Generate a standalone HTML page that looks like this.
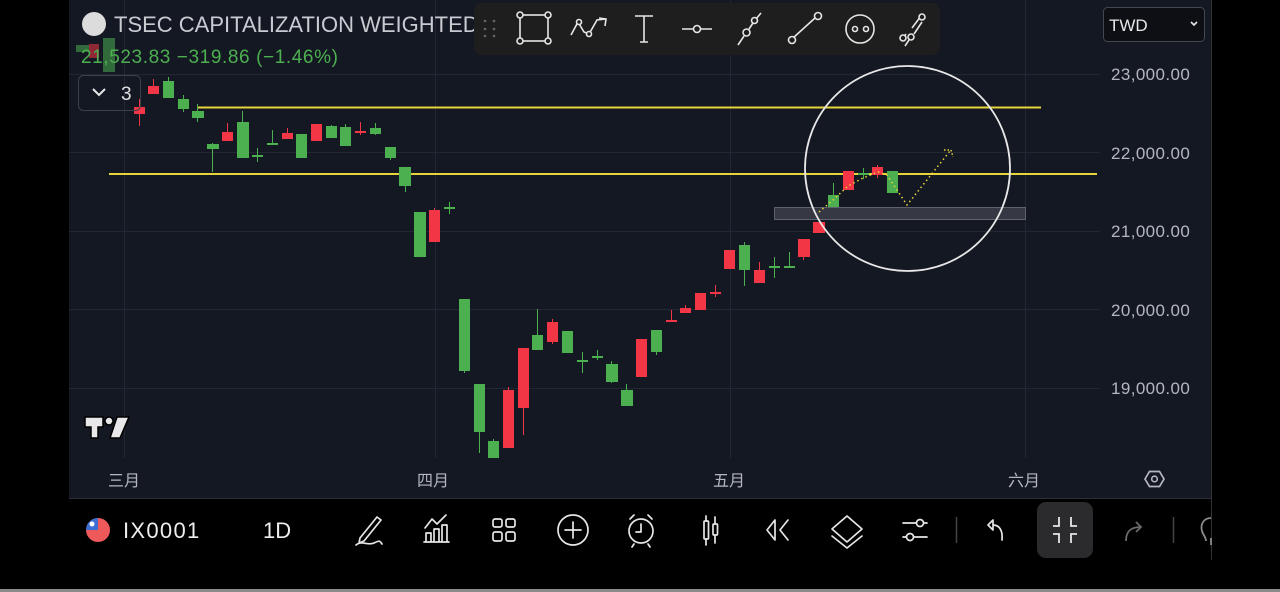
<!DOCTYPE html>
<html><head><meta charset="utf-8"><style>
html,body{margin:0;padding:0;background:#000;width:1280px;height:592px;overflow:hidden;font-family:"Liberation Sans","Noto Sans CJK SC",sans-serif}
svg{display:block}
</style></head><body>
<svg width="1280" height="592" viewBox="0 0 1280 592" xmlns="http://www.w3.org/2000/svg" font-family="Liberation Sans, Noto Sans CJK SC, sans-serif">
<rect width="1280" height="592" fill="#000"/>
<rect x="69" y="0" width="1142" height="498" fill="#141823"/>
<line x1="1211.5" y1="0" x2="1211.5" y2="560" stroke="#333" stroke-width="1"/>
<line x1="69" y1="498.5" x2="1211" y2="498.5" stroke="#2e3038" stroke-width="1"/>
<rect x="0" y="589" width="1280" height="3" fill="#8a8a8a"/>
<!-- grid -->
<g stroke="#232733" stroke-width="1">
<line x1="69" y1="74.5" x2="1100" y2="74.5"/><line x1="69" y1="152.5" x2="1100" y2="152.5"/>
<line x1="69" y1="231.5" x2="1100" y2="231.5"/><line x1="69" y1="309.5" x2="1100" y2="309.5"/>
<line x1="69" y1="388.5" x2="1100" y2="388.5"/>
<line x1="124.5" y1="0" x2="124.5" y2="458"/><line x1="435.5" y1="0" x2="435.5" y2="458"/>
<line x1="730.5" y1="0" x2="730.5" y2="458"/><line x1="1025.5" y1="0" x2="1025.5" y2="458"/>
</g>
<!-- price labels -->
<g fill="#b4b7bf" font-size="17" letter-spacing="0.4">
<text x="1111" y="80">23,000.00</text><text x="1111" y="159">22,000.00</text>
<text x="1111" y="237">21,000.00</text><text x="1111" y="316">20,000.00</text>
<text x="1111" y="394">19,000.00</text>
</g>
<g fill="#b4b7bf" font-size="16">
<text x="108" y="486">三月</text><text x="417" y="486">四月</text>
<text x="713" y="486">五月</text><text x="1008" y="486">六月</text>
</g>
<polygon points="1145,479 1149.5,471.5 1159.5,471.5 1164,479 1159.5,486.5 1149.5,486.5" fill="none" stroke="#b4b7bf" stroke-width="1.7"/>
<circle cx="1154.5" cy="479" r="2.8" fill="none" stroke="#b4b7bf" stroke-width="1.6"/>
<!-- TV logo -->
<g fill="#e8e8ea" stroke="#000" stroke-width="1.5">
<path d="M85,417 H103 V427 H98 V438 H91 V427 H85 Z"/>
<circle cx="109" cy="421" r="4"/>
<path d="M117,417 H129 L120,438 H110 Z"/>
</g>
<!-- background candles near legend -->
<g opacity="0.55">
<rect x="76" y="45" width="13" height="7" fill="#4caf50"/>
<rect x="89" y="44" width="10" height="14" fill="#f23645"/>
<rect x="103" y="38" width="12" height="34" fill="#4caf50"/>
</g>
<!-- lines -->
<line x1="197" y1="107.5" x2="1041" y2="107.5" stroke="#e6d53a" stroke-width="2"/>
<line x1="109" y1="174" x2="1097" y2="174" stroke="#e6d53a" stroke-width="2"/>
<rect x="774.5" y="207.5" width="251" height="12" fill="#3c3f4a" fill-opacity="0.85" stroke="#5f626c" stroke-width="1"/>
<!-- candles -->
<g>
<g fill="#f23645" stroke="#f23645">
<line x1="139.5" y1="99" x2="139.5" y2="126"/><rect x="134" y="107" width="11" height="7" stroke="none"/>
<line x1="153.5" y1="79" x2="153.5" y2="94"/><rect x="148" y="86" width="11" height="8" stroke="none"/>
<line x1="227.5" y1="123" x2="227.5" y2="141"/><rect x="222" y="132" width="11" height="9" stroke="none"/>
<line x1="287.5" y1="128" x2="287.5" y2="139"/><rect x="282" y="133" width="11" height="6" stroke="none"/>
<rect x="311" y="124" width="11" height="17" stroke="none"/>
<line x1="360.5" y1="122" x2="360.5" y2="135"/><rect x="355" y="131" width="11" height="2" stroke="none"/>
<line x1="434.5" y1="208" x2="434.5" y2="242"/><rect x="429" y="210" width="11" height="32" stroke="none"/>
<line x1="508.5" y1="387" x2="508.5" y2="448"/><rect x="503" y="390" width="11" height="58" stroke="none"/>
<line x1="523.5" y1="348" x2="523.5" y2="435"/><rect x="518" y="348" width="11" height="60" stroke="none"/>
<line x1="552.5" y1="319" x2="552.5" y2="344"/><rect x="547" y="322" width="11" height="20" stroke="none"/>
<rect x="636" y="339" width="11" height="38" stroke="none"/>
<line x1="671.5" y1="310" x2="671.5" y2="322"/><rect x="666" y="320" width="11" height="2" stroke="none"/>
<line x1="685.5" y1="305" x2="685.5" y2="313"/><rect x="680" y="308" width="11" height="5" stroke="none"/>
<rect x="695" y="293" width="11" height="17" stroke="none"/>
<line x1="715.5" y1="285" x2="715.5" y2="297"/><rect x="710" y="292" width="11" height="2" stroke="none"/>
<rect x="724" y="250" width="11" height="19" stroke="none"/>
<line x1="759.5" y1="262" x2="759.5" y2="283"/><rect x="754" y="270" width="11" height="13" stroke="none"/>
<line x1="803.5" y1="239" x2="803.5" y2="260"/><rect x="798" y="239" width="12" height="18" stroke="none"/>
<rect x="813" y="222" width="12" height="11" stroke="none"/>
<rect x="843" y="171" width="11" height="19" stroke="none"/>
<line x1="877.5" y1="165" x2="877.5" y2="178"/><rect x="872" y="167" width="11" height="8" stroke="none"/>
</g>
<g fill="#4caf50" stroke="#4caf50">
<line x1="168.5" y1="77" x2="168.5" y2="98"/><rect x="163" y="81" width="11" height="17" stroke="none"/>
<line x1="183.5" y1="95" x2="183.5" y2="112"/><rect x="178" y="99" width="11" height="10" stroke="none"/>
<line x1="197.5" y1="104" x2="197.5" y2="122"/><rect x="192" y="111" width="12" height="7" stroke="none"/>
<line x1="212.5" y1="143" x2="212.5" y2="172"/><rect x="207" y="144" width="12" height="5" stroke="none"/>
<line x1="242.5" y1="111" x2="242.5" y2="158"/><rect x="237" y="122" width="12" height="36" stroke="none"/>
<line x1="257.5" y1="148" x2="257.5" y2="162"/><rect x="252" y="155" width="11" height="2" stroke="none"/>
<line x1="272.5" y1="130" x2="272.5" y2="145"/><rect x="267" y="143" width="11" height="2" stroke="none"/>
<rect x="296" y="134" width="11" height="24" stroke="none"/>
<line x1="331.5" y1="125" x2="331.5" y2="138"/><rect x="326" y="126" width="11" height="12" stroke="none"/>
<line x1="345.5" y1="124" x2="345.5" y2="146"/><rect x="340" y="127" width="11" height="19" stroke="none"/>
<line x1="375.5" y1="123" x2="375.5" y2="135"/><rect x="370" y="128" width="11" height="6" stroke="none"/>
<line x1="390.5" y1="147" x2="390.5" y2="160"/><rect x="385" y="147" width="11" height="11" stroke="none"/>
<line x1="405.5" y1="167" x2="405.5" y2="192"/><rect x="399" y="167" width="12" height="19" stroke="none"/>
<rect x="414" y="212" width="12" height="45" stroke="none"/>
<line x1="449.5" y1="202" x2="449.5" y2="214"/><rect x="444" y="207" width="11" height="2" stroke="none"/>
<line x1="464.5" y1="299" x2="464.5" y2="373"/><rect x="459" y="299" width="11" height="72" stroke="none"/>
<line x1="479.5" y1="384" x2="479.5" y2="453"/><rect x="474" y="384" width="11" height="48" stroke="none"/>
<line x1="493.5" y1="439" x2="493.5" y2="458"/><rect x="488" y="441" width="11" height="17" stroke="none"/>
<line x1="537.5" y1="309" x2="537.5" y2="350"/><rect x="532" y="335" width="11" height="15" stroke="none"/>
<rect x="562" y="331" width="11" height="22" stroke="none"/>
<line x1="582.5" y1="352" x2="582.5" y2="373"/><rect x="577" y="360" width="11" height="2" stroke="none"/>
<line x1="597.5" y1="350" x2="597.5" y2="360"/><rect x="592" y="356" width="11" height="2" stroke="none"/>
<line x1="611.5" y1="361" x2="611.5" y2="383"/><rect x="606" y="364" width="12" height="18" stroke="none"/>
<line x1="626.5" y1="384" x2="626.5" y2="406"/><rect x="621" y="390" width="12" height="16" stroke="none"/>
<line x1="656.5" y1="330" x2="656.5" y2="355"/><rect x="651" y="330" width="11" height="22" stroke="none"/>
<line x1="744.5" y1="242" x2="744.5" y2="286"/><rect x="739" y="245" width="11" height="25" stroke="none"/>
<line x1="774.5" y1="257" x2="774.5" y2="278"/><rect x="769" y="266" width="11" height="2" stroke="none"/>
<line x1="789.5" y1="252" x2="789.5" y2="268"/><rect x="784" y="266" width="11" height="2" stroke="none"/>
<line x1="833.5" y1="183" x2="833.5" y2="207"/><rect x="828" y="195" width="11" height="12" stroke="none"/>
<line x1="863.5" y1="168" x2="863.5" y2="179"/><rect x="858" y="173" width="11" height="2" stroke="none"/>
<rect x="887" y="171" width="11" height="22" stroke="none"/>
</g>
</g>
<!-- projection dotted -->
<polyline points="819,212 833,200 848,186 863,178 878,172 887,175 907,205 950,151" fill="none" stroke="#e6d53a" stroke-width="1.5" stroke-dasharray="1.5,3"/>
<polyline points="944,150 951,150 953,157" fill="none" stroke="#e6d53a" stroke-width="1.5" stroke-dasharray="1.5,2"/>
<circle cx="907.5" cy="168.5" r="102.5" fill="none" stroke="#e8e8e8" stroke-width="1.8"/>
<!-- legend -->
<circle cx="94" cy="24" r="12" fill="#dcdcdc"/>
<text x="114" y="32" font-size="22" fill="#c9cbd1">TSEC CAPITALIZATION WEIGHTED</text>
<text x="81" y="63" font-size="19" letter-spacing="0.6" fill="#4caf50">21,523.83  −319.86 (−1.46%)</text>
<rect x="78.5" y="75.5" width="62" height="35" rx="5" fill="none" stroke="#3e4048"/>
<polyline points="93,89 99,95 105,89" fill="none" stroke="#e8e8e8" stroke-width="2"/>
<text x="121" y="100" font-size="19" fill="#e0e0e0">3</text>
<!-- top drawing toolbar -->
<rect x="474" y="3" width="466" height="52" rx="8" fill="#1e1e1f"/>
<g fill="#666"><circle cx="485" cy="21" r="1.3"/><circle cx="494" cy="21" r="1.3"/><circle cx="485" cy="29" r="1.3"/><circle cx="494" cy="29" r="1.3"/><circle cx="485" cy="36" r="1.3"/><circle cx="494" cy="36" r="1.3"/></g>
<g fill="none" stroke="#e6e6e6" stroke-width="1.6">
<rect x="520" y="15" width="28" height="26"/>
<g fill="#1e1e1f"><circle cx="520" cy="15" r="3"/><circle cx="548" cy="15" r="3"/><circle cx="520" cy="41" r="3"/><circle cx="548" cy="41" r="3"/></g>
<polyline points="571,35 578,22 584,32 589,34 597,20 606,19"/><polyline points="599,18 606,19 605,26"/>
<g fill="#1e1e1f"><circle cx="579" cy="22" r="2.5"/><circle cx="589" cy="34" r="2.5"/></g>
<path d="M635,16 H653 M644,16 V42 M640,42 H648"/>
<path d="M682,29 H693 M701,29 H712"/><circle cx="697" cy="29" r="3.5" fill="#1e1e1f"/>
<path d="M738,45 L744,36 M749,29 L753,23 M756,19 L761,13"/><circle cx="746.5" cy="32.5" r="3.5" fill="#1e1e1f"/><circle cx="754.5" cy="20.5" r="3" fill="#1e1e1f"/>
<path d="M793,38 L815,18"/><circle cx="792" cy="40" r="3.5" fill="#1e1e1f"/><circle cx="818" cy="16" r="3.5" fill="#1e1e1f"/>
<circle cx="860" cy="29" r="14"/><circle cx="855" cy="29" r="2.5"/><circle cx="866" cy="29" r="2.5"/>
<path d="M903,38 L906,34 M912,28 L921,16 M905,46 L909,40 M914,34 L922,22"/><circle cx="903" cy="38" r="3" fill="#1e1e1f"/><circle cx="922" cy="17" r="3" fill="#1e1e1f"/><circle cx="911" cy="37" r="3" fill="#1e1e1f"/>
</g>
<!-- TWD -->
<rect x="1103.5" y="7.5" width="101" height="34" rx="4" fill="#0e0f14" stroke="#45474f"/>
<text x="1109" y="31" font-size="17" fill="#e8e8e8">TWD</text>
<polyline points="1191,22 1194,25 1197,22" fill="none" stroke="#e8e8e8" stroke-width="1.6"/>
<!-- bottom toolbar -->
<circle cx="98" cy="530" r="12" fill="#ee5a5a"/>
<path d="M86,530 A12,12 0 0 1 98,518 V530 Z" fill="#3b6fd6"/>
<circle cx="92" cy="524" r="2.5" fill="#fff"/>
<text x="123" y="538" font-size="22" letter-spacing="1.3" fill="#eee">IX0001</text>
<text x="263" y="538" font-size="22" fill="#eee">1D</text>
<g fill="none" stroke="#e6e6e6" stroke-width="1.7" stroke-linecap="round" stroke-linejoin="round">
<path d="M360,538 L377,517 L381,520 L364,541 L359,543 Z M356,545 C362,540 368,546 374,543 S380,541 382,544"/>
<path d="M424,542 H449 M426,542 V533 H431 V542 M434,542 V529 H439 V542 M442,542 V525 H447 V542 M425,528 L432,519 L437,524 L446,515"/>
<rect x="493" y="519" width="9" height="8" rx="2"/><rect x="506" y="519" width="9" height="8" rx="2"/><rect x="493" y="532" width="9" height="9" rx="2"/><rect x="506" y="532" width="9" height="9" rx="2"/>
<circle cx="573" cy="530" r="15"/><path d="M573,522 V538 M565,530 H581"/>
<circle cx="641" cy="531" r="12"/><path d="M641,524 V532 H636 M630,519 L634,515 M652,519 L648,515 M634,544 L632,547 M648,544 L650,547"/>
<rect x="704" y="521" width="4.5" height="18" rx="1"/><path d="M706,516 V521 M706,539 V545"/><rect x="713" y="524" width="4.5" height="11" rx="1"/><path d="M715,517 V524 M715,535 V543"/>
<path d="M775,520 L767,530 L775,540 Z M788,520 L780,530 L788,540"/>
<path d="M847,516 L862,529 L847,542 L832,529 Z M832,536 L847,548 L862,536"/>
<path d="M903,523 H927 M903,537 H927"/><circle cx="920" cy="523" r="3.5" fill="#000"/><circle cx="910" cy="537" r="3.5" fill="#000"/>
<path d="M988,525 L993,520 L993,530 Z M993,525 C999,525 1003,530 1002,540" fill="none"/>
</g>
<line x1="956.5" y1="517" x2="956.5" y2="543" stroke="#444" stroke-width="1.5"/>
<rect x="1037" y="502" width="56" height="56" rx="9" fill="#2b2b2d"/>
<g fill="none" stroke="#e6e6e6" stroke-width="1.8">
<path d="M1059,517 V526 H1053 M1071,517 V526 H1077 M1059,543 V534 H1053 M1071,543 V534 H1077"/>
</g>
<path d="M1126,541 C1126,531 1131,527 1141,527 M1136,522 L1141,527 L1136,532" fill="none" stroke="#6a6a6a" stroke-width="1.8"/>
<line x1="1173.5" y1="517" x2="1173.5" y2="543" stroke="#444" stroke-width="1.5"/>
<path d="M1211,518 C1204,518 1200,524 1202,531 C1203,535 1206,537 1206,541 M1211,545 V538" fill="none" stroke="#8a8a8a" stroke-width="1.8"/>
<rect x="1212" y="500" width="68" height="88" fill="#000"/>
</svg>
</body></html>
